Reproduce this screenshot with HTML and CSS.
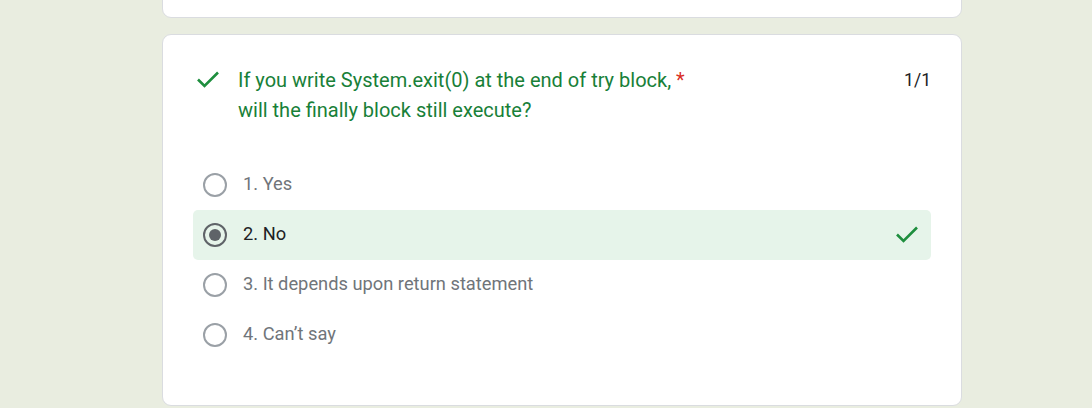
FILE: index.html
```html
<!DOCTYPE html>
<html>
<head>
<meta charset="utf-8">
<link rel="stylesheet" href="styles.css">
</head>
<body>
<div class="page">
  <div class="card card-prev"></div>
  <div class="card card-q">
    <div class="q-head">
      <svg class="q-check" width="24" height="24" viewBox="0 0 24 24"><polyline points="2,11.5 8.5,18 22,4.5" fill="none" stroke="#1e8e3e" stroke-width="2.6"/></svg>
      <div class="q-title">If you write System.exit(0) at the end of try block, <span class="req">*</span><br>will the finally block still execute?</div>
      <div class="q-score">1/1</div>
    </div>
    <div class="options">
      <div class="opt"><span class="radio"></span><span class="opt-text">1. Yes</span></div>
      <div class="opt opt-correct"><span class="radio radio-on"></span><span class="opt-text">2. No</span>
        <svg class="opt-check" width="24" height="24" viewBox="0 0 24 24"><polyline points="2,11.5 8.5,18 22,4.5" fill="none" stroke="#1e8e3e" stroke-width="2.6"/></svg>
      </div>
      <div class="opt"><span class="radio"></span><span class="opt-text">3. It depends upon return statement</span></div>
      <div class="opt"><span class="radio"></span><span class="opt-text">4. Can’t say</span></div>
    </div>
  </div>
</div>
</body>
</html>
```
FILE: styles.css
```css
html, body {
  margin: 0;
  padding: 0;
  background: #e9ede0;
  font-family: Roboto, "Liberation Sans", Arial, sans-serif;
}
.page {
  padding-left: 162px;
  width: 800px;
  height: 408px;
  overflow: hidden;
  display: flex;
  flex-direction: column;
  gap: 16px;
}
.card {
  box-sizing: border-box;
  width: 800px;
  background: #fff;
  border: 1px solid #dadce0;
  border-radius: 9px;
}
.card-prev {
  margin-top: -40px;
  height: 58px;
  flex: none;
}
.card-q {
  flex: none;
  height: 372px;
  padding: 30px 30px 0 30px;
}
.q-head {
  display: flex;
  align-items: flex-start;
}
.q-check {
  flex: none;
  width: 24px;
  height: 24px;
  margin: 3px 0 0 3px;
}
.q-title {
  margin-left: 18px;
  flex: 1;
  font-size: 20px;
  line-height: 30px;
  color: #188038;
}
.req {
  color: #d93025;
}
.q-score {
  font-size: 17.5px;
  line-height: 30px;
  color: #202124;
}
.options {
  margin-top: 35px;
  display: flex;
  flex-direction: column;
}
.opt {
  height: 50px;
  display: flex;
  align-items: center;
  padding: 0 12px 0 10px;
  border-radius: 5px;
}
.opt-correct {
  background: #e6f4ea;
}
.radio {
  box-sizing: border-box;
  width: 24px;
  height: 24px;
  border: 2px solid #9aa0a6;
  border-radius: 50%;
  flex: none;
  display: flex;
  align-items: center;
  justify-content: center;
}
.radio-on {
  border-color: #5f6368;
}
.radio-on::after {
  content: "";
  width: 12px;
  height: 12px;
  border-radius: 50%;
  background: #5f6368;
}
.opt-text {
  margin-left: 16px;
  padding-bottom: 4px;
  font-size: 18.3px;
  color: #70757a;
  flex: 1;
}
.opt-correct .opt-text {
  color: #202124;
}
.opt-check {
  flex: none;
}
```
